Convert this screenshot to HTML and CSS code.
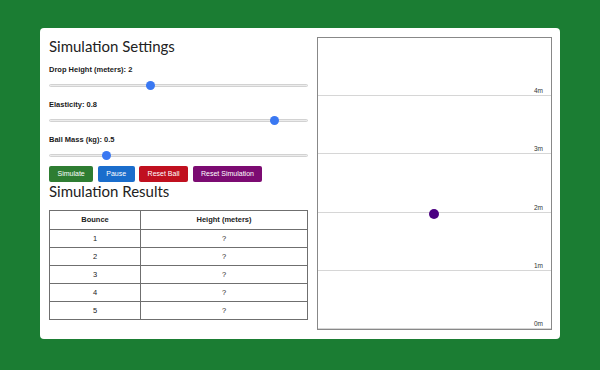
FILE: index.html
```html
<!DOCTYPE html>
<html lang="en">
<head>
  <meta charset="UTF-8">
  <meta name="viewport" content="width=device-width, initial-scale=1.0">
  <title>Bouncing Ball Simulation</title>
  <link rel="stylesheet" href="styles.css">
</head>
<body>
  <div class="card">
    <div class="panel">
      <h2>Simulation Settings</h2>
      <div class="field">
        <label for="height">Drop Height (meters): <span id="heightValue">2</span></label>
        <input type="range" id="height" min="0.1" max="5" step="0.1" value="2">
      </div>
      <div class="field">
        <label for="elasticity">Elasticity: <span id="elasticityValue">0.8</span></label>
        <input type="range" id="elasticity" min="0" max="0.9" step="0.1" value="0.8">
      </div>
      <div class="field">
        <label for="mass">Ball Mass (kg): <span id="massValue">0.5</span></label>
        <input type="range" id="mass" min="0.1" max="2" step="0.1" value="0.5">
      </div>
      <div class="buttons">
        <button class="btn btn-green">Simulate</button>
        <button class="btn btn-blue">Pause</button>
        <button class="btn btn-red">Reset Ball</button>
        <button class="btn btn-purple">Reset Simulation</button>
      </div>
      <h2>Simulation Results</h2>
      <table class="results">
        <thead>
          <tr><th>Bounce</th><th>Height (meters)</th></tr>
        </thead>
        <tbody>
          <tr><td>1</td><td>?</td></tr>
          <tr><td>2</td><td>?</td></tr>
          <tr><td>3</td><td>?</td></tr>
          <tr><td>4</td><td>?</td></tr>
          <tr><td>5</td><td>?</td></tr>
        </tbody>
      </table>
    </div>
    <div class="sim">
      <div class="level"><span>4m</span></div>
      <div class="level"><span>3m</span></div>
      <div class="level"><span>2m</span></div>
      <div class="level"><span>1m</span></div>
      <div class="level"><span>0m</span></div>
      <div class="ball" style="left: 116px; top: 176px;"></div>
    </div>
  </div>
</body>
</html>
```

FILE: styles.css
```css
body {
  margin: 0;
  padding: 28px 40px 0;
  background-color: #1b7d33;
  font-family: "Liberation Sans", Arial, sans-serif;
  color: #222;
}
.card {
  display: flex;
  gap: 9px;
  height: 311px;
  box-sizing: border-box;
  padding: 9px 8px 9px 9px;
  background-color: #fff;
  border-radius: 4px;
}
.panel {
  width: 259px;
}
h2 {
  margin: 0;
  font-family: Lato, sans-serif;
  font-size: 15px;
  font-weight: 400;
  line-height: 18px;
  color: #222;
}
.field {
  margin-top: 10px;
}
.field + .field {
  margin-top: 10.5px;
}
label {
  display: block;
  font-size: 7.5px;
  font-weight: bold;
  line-height: 9px;
  color: #1a1a1a;
}
input[type="range"] {
  -webkit-appearance: none;
  appearance: none;
  display: block;
  width: 100%;
  height: 9px;
  margin: 6.5px 0 0;
  background: transparent;
}
input[type="range"]::-webkit-slider-runnable-track {
  height: 3px;
  background-color: #ececec;
  border: 1px solid #d2d2d2;
  border-radius: 2px;
}
input[type="range"]::-webkit-slider-thumb {
  -webkit-appearance: none;
  width: 9px;
  height: 9px;
  margin-top: -3.5px;
  border-radius: 50%;
  background-color: #3a78f2;
}
.buttons {
  display: flex;
  gap: 4.5px;
  margin-top: 6px;
}
.btn {
  height: 16.5px;
  padding: 0 8.5px;
  border: none;
  border-radius: 2px;
  font-family: "Liberation Sans", Arial, sans-serif;
  font-size: 7px;
  color: #fff;
  cursor: pointer;
}
.btn-green { background-color: #2e7d32; }
.btn-blue { background-color: #1a6dcc; }
.btn-red { background-color: #c0101f; }
.btn-purple { background-color: #7c0b72; }
.results {
  width: 100%;
  margin-top: 10px;
  border-collapse: collapse;
  font-size: 7.5px;
  text-align: center;
}
.results th,
.results td {
  border: 1px solid #6f6f6f;
  height: 17px;
  padding: 0;
}
.results th {
  height: 17.7px;
}
.results th:first-child {
  width: 90px;
}
.sim {
  position: relative;
  flex: 1;
  display: flex;
  flex-direction: column;
  border: 1px solid #888;
}
.level {
  flex: 1;
  display: flex;
  align-items: flex-end;
  justify-content: flex-end;
  padding-right: 8px;
  border-bottom: 1.5px solid #d6d6d6;
  font-size: 6.5px;
  color: #333;
}
.level:last-of-type {
  border-bottom: none;
}
.level span {
  line-height: 8px;
}
.ball {
  position: absolute;
  width: 10px;
  height: 10px;
  margin: -5px 0 0 -5px;
  border-radius: 50%;
  background-color: #4b0082;
}
```
